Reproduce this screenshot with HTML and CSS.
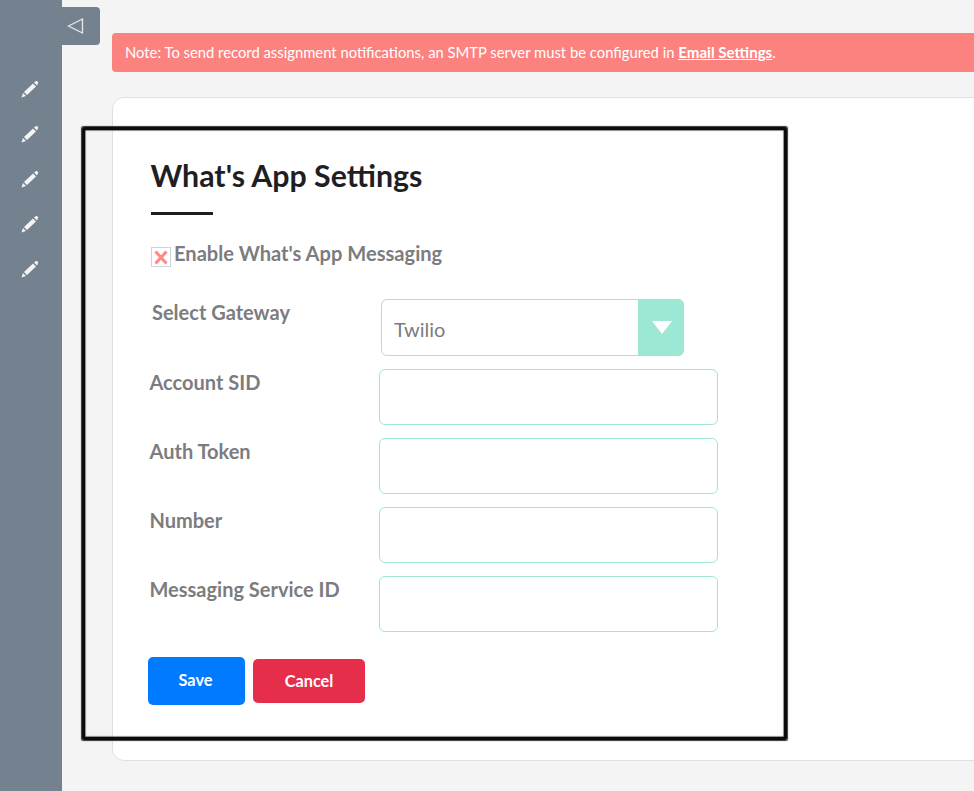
FILE: index.html
```html
<!DOCTYPE html>
<html lang="en">
<head>
<meta charset="utf-8">
<title>What's App Settings</title>
<link rel="stylesheet" href="styles.css">
</head>
<body>
<div class="app">
  <aside class="sidebar">
    <a class="nav-item"><svg class="pencil" viewBox="0 0 18 18"><path d="M0.5 17.5 L2 13 L5 16 Z M3 12 L12 3.5 L15 6.500 L6 15 Z M13 2.500 L15 1 Q15.700 0.700 16.300 1.200 L17 2 Q17.500 2.700 17 3.300 L16 5.500 Z"/></svg></a>
    <a class="nav-item"><svg class="pencil" viewBox="0 0 18 18"><path d="M0.5 17.5 L2 13 L5 16 Z M3 12 L12 3.5 L15 6.500 L6 15 Z M13 2.500 L15 1 Q15.700 0.700 16.300 1.200 L17 2 Q17.500 2.700 17 3.300 L16 5.500 Z"/></svg></a>
    <a class="nav-item"><svg class="pencil" viewBox="0 0 18 18"><path d="M0.5 17.5 L2 13 L5 16 Z M3 12 L12 3.5 L15 6.500 L6 15 Z M13 2.500 L15 1 Q15.700 0.700 16.300 1.200 L17 2 Q17.500 2.700 17 3.300 L16 5.500 Z"/></svg></a>
    <a class="nav-item"><svg class="pencil" viewBox="0 0 18 18"><path d="M0.5 17.5 L2 13 L5 16 Z M3 12 L12 3.5 L15 6.500 L6 15 Z M13 2.500 L15 1 Q15.700 0.700 16.300 1.200 L17 2 Q17.500 2.700 17 3.300 L16 5.500 Z"/></svg></a>
    <a class="nav-item"><svg class="pencil" viewBox="0 0 18 18"><path d="M0.5 17.5 L2 13 L5 16 Z M3 12 L12 3.5 L15 6.500 L6 15 Z M13 2.500 L15 1 Q15.700 0.700 16.300 1.200 L17 2 Q17.500 2.700 17 3.300 L16 5.500 Z"/></svg></a>
  </aside>
  <button class="toggle" type="button" aria-label="Collapse"><svg class="toggle-icon" viewBox="0 0 18 18"><path d="M1.500 9 L15.500 2 L15.500 16 Z"/></svg></button>
  <main class="main">
    <div class="notice">Note: To send record assignment notifications, an SMTP server must be configured in <a class="notice-link">Email Settings</a>.</div>
    <section class="card">
      <h1 class="title">What's App Settings</h1>
      <div class="rule"></div>
      <div class="check-row">
        <span class="checkbox"><svg class="cross" viewBox="0 0 14 15"><path d="M1.500 1.500 L12.500 13.500 M12.500 1.500 L1.500 13.500"/></svg></span>
        <span class="check-label">Enable What's App Messaging</span>
      </div>
      <div class="gateway-row">
        <label class="field-label gateway-label">Select Gateway</label>
        <div class="select">
          <span class="select-value">Twilio</span>
          <span class="select-arrow"><span class="arrow-shape"></span></span>
        </div>
      </div>
      <div class="fields">
        <div class="field-row"><label class="field-label">Account SID</label><input class="input" type="text"></div>
        <div class="field-row"><label class="field-label">Auth Token</label><input class="input" type="text"></div>
        <div class="field-row"><label class="field-label">Number</label><input class="input" type="text"></div>
        <div class="field-row"><label class="field-label">Messaging Service ID</label><input class="input" type="text"></div>
      </div>
      <div class="actions">
        <button class="btn btn-save" type="button">Save</button>
        <button class="btn btn-cancel" type="button">Cancel</button>
      </div>
    </section>
  </main>
  <div class="annotation"></div>
</div>
</body>
</html>
```
FILE: styles.css
```css
* { box-sizing: border-box; }
html, body { margin: 0; height: 100%; overflow: hidden; }
body { font-family: Lato, "Liberation Sans", sans-serif; background: #f4f4f4; color: #7c7c80; }
.app { position: relative; display: flex; height: 791px; width: 974px; overflow: hidden; }
.sidebar { width: 62px; flex: none; background: #74818e; padding-top: 80px; display: flex; flex-direction: column; align-items: center; gap: 26.900px; }
.nav-item { display: block; height: 18px; width: 18px; margin-left: -2px; }
.pencil { display: block; width: 18px; height: 18px; fill: #f2f4f6; }
.toggle { position: absolute; left: 62px; top: 7px; width: 38px; height: 38px; padding: 0 0 0 5px; border: 0; background: #74818e; border-radius: 0 4px 4px 0; display: flex; align-items: center; justify-content: flex-start; }
.toggle-icon { width: 18px; height: 18px; fill: none; stroke: #e6eaee; stroke-width: 1.300; }
.main { flex: none; width: 912px; padding: 33px 0 0 50px; }
.notice { width: 880px; height: 39px; background: #fc8280; border-radius: 4px 0 0 4px; color: #fff; font-size: 14.8px; line-height: 39px; padding-left: 13px; white-space: nowrap; }
.notice-link { font-size: 15.1px; font-weight: 700; text-decoration: underline; }
.card { width: 880px; height: 664px; margin-top: 25px; background: #fff; border: 1px solid #e0e0e0; border-radius: 12px; padding: 59px 0 0 38px; }
.title { margin: 0 0 0 -0.500px; font-size: 30.3px; line-height: 36px; font-weight: 700; color: #1f1f23; }
.rule { width: 62px; height: 3px; margin-top: 19px; background: #1f1f23; }
.check-row { display: flex; align-items: flex-start; margin-top: 26px; height: 28px; }
.checkbox { width: 20px; height: 20px; margin-top: 6px; border: 1px solid #cfd4da; background: #fff; display: flex; align-items: center; justify-content: center; flex: none; }
.cross { width: 14px; height: 15px; margin-top: 1px; fill: none; stroke: #fc8c8a; stroke-width: 3.200; }
.check-label { margin-left: 3px; font-size: 20.1px; line-height: 24px; font-weight: 700; color: #7c7c80; }
.gateway-row { display: flex; margin-top: 30px; margin-left: 1px; }
.field-label { display: block; font-size: 20px; line-height: 24px; font-weight: 700; color: #7c7c80; white-space: nowrap; }
.gateway-label { width: 229px; padding-top: 1px; }
.select { width: 303px; height: 57px; display: flex; border: 1px solid #9de8d5; border-radius: 6px; }
.select-value { flex: 1; padding-left: 12px; font-size: 20px; line-height: 58px; color: #7c7c80; }
.select-arrow { width: 46px; margin: -1px -1px -1px 0; background: #9de8d5; border-radius: 0 6px 6px 0; display: flex; align-items: center; justify-content: center; }
.arrow-shape { width: 0; height: 0; border-left: 10px solid transparent; border-right: 10px solid transparent; border-top: 13px solid #fff; margin-top: -1px; margin-left: 1px; }
.fields { display: flex; flex-direction: column; gap: 13px; margin-top: 13px; margin-left: -2px; }
.field-row { display: flex; height: 56px; }
.field-row .field-label { width: 230px; padding-top: 1px; padding-left: 0.500px; }
.input { width: 339px; height: 56px; border: 1px solid #9de8d5; border-radius: 6px; background: #fff; outline: none; }
.actions { display: flex; align-items: center; gap: 8px; margin-top: 25px; margin-left: -3px; }
.btn { border: 0; color: #fff; font-family: inherit; font-size: 16.3px; font-weight: 700; border-radius: 5px; padding: 0 0 3px; }
.btn-save { width: 97px; height: 48px; background: #007bff; padding-right: 2px; }
.btn-cancel { width: 112px; height: 44px; background: #e62e4b; padding-bottom: 1px; }
.annotation { position: absolute; left: 82px; top: 127px; width: 705px; height: 613px; border: 3px solid #0c0c0c; border-radius: 2px; box-shadow: 0 0 1px 0.500px #333, inset 0 0 1px 0.500px #333; pointer-events: none; }
```
